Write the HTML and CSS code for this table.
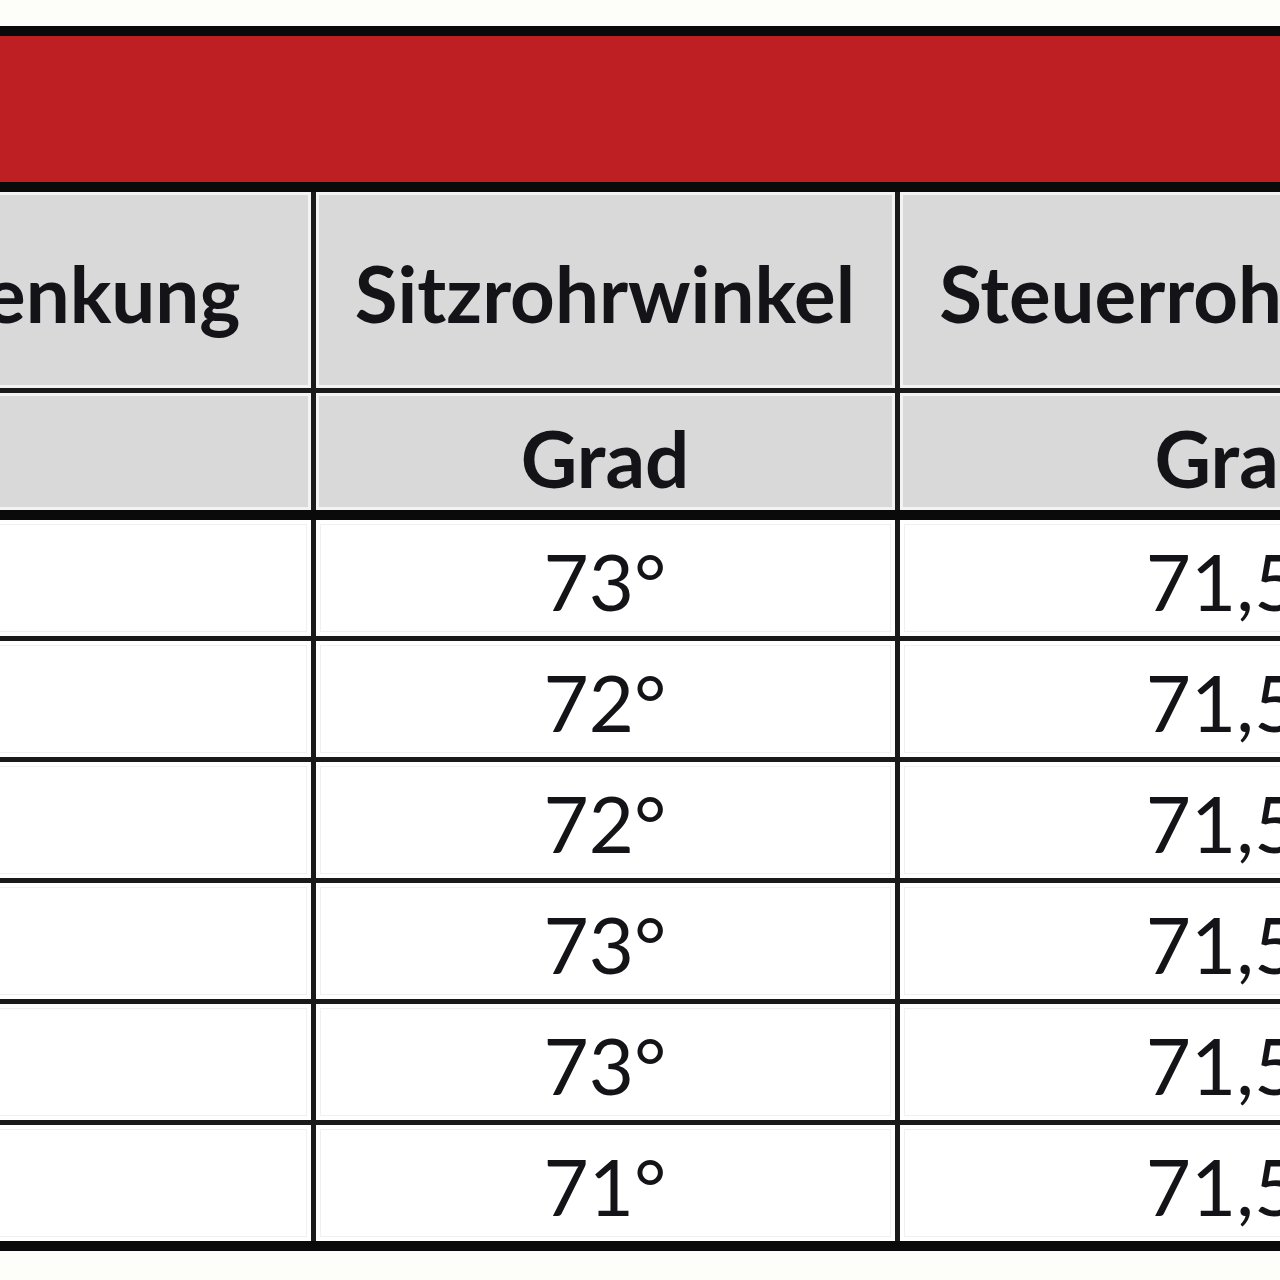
FILE: index.html
```html
<!DOCTYPE html>
<html lang="de">
<head>
    <meta charset="UTF-8">
    <title>Geometrie</title>
    <link rel="stylesheet" href="styles.css">
</head>
<body>
<div class="sheet">
    <table class="geo">
        <colgroup>
            <col class="c-drop">
            <col class="c-seat">
            <col class="c-head">
        </colgroup>
        <tr class="title">
            <td colspan="3">&nbsp;</td>
        </tr>
        <tr class="head">
            <th class="drop">Tretlagerabsenkung</th>
            <th>Sitzrohrwinkel</th>
            <th>Steuerrohrwinkel</th>
        </tr>
        <tr class="unit">
            <th class="drop"></th>
            <th>Grad</th>
            <th>Grad</th>
        </tr>
        <tr class="row">
            <td></td>
            <td>73°</td>
            <td>71,5°</td>
        </tr>
        <tr class="row">
            <td></td>
            <td>72°</td>
            <td>71,5°</td>
        </tr>
        <tr class="row">
            <td></td>
            <td>72°</td>
            <td>71,5°</td>
        </tr>
        <tr class="row">
            <td></td>
            <td>73°</td>
            <td>71,5°</td>
        </tr>
        <tr class="row">
            <td></td>
            <td>73°</td>
            <td>71,5°</td>
        </tr>
        <tr class="row">
            <td></td>
            <td>71°</td>
            <td>71,5°</td>
        </tr>
    </table>
</div>
</body>
</html>
```

FILE: styles.css
```css
*{
    margin: 0;
    padding: 0;
}

html,body{
    overflow: hidden;
}

body{
    background-color: #fdfdfa;
    font-family: "Lato", "Liberation Sans", sans-serif;
    color: #141418;
}

.sheet{
    padding-top: 26px;
}

.geo{
    border-collapse: collapse;
    table-layout: fixed;
    width: 2278px;
    margin-left: -700px;
    border: 10px solid #0a0a0a;
}

.c-drop{
    width: 1008px;
}
.c-seat{
    width: 584px;
}
.c-head{
    width: 686px;
}

.geo td,
.geo th{
    border: 5px solid #1a1a1a;
    text-align: center;
    vertical-align: middle;
    white-space: nowrap;
}

/* roter Titelbalken */
.title td{
    height: 146px;
    background-color: #be1f22;
    border-bottom: 10px solid #0a0a0a;
}

.head th,
.unit th{
    background-color: #d9d9d9;
    box-shadow: inset 0 0 0 3px #f3f3f3;
    font-weight: bold;
    font-size: 78px;
}

.head th{
    height: 190px;
    padding-top: 6px;
}

.unit th{
    height: 105px;
    padding-top: 12px;
    border-bottom: 10px solid #0a0a0a;
}

.head .drop{
    text-align: right;
    padding-right: 70px;
}

.row td{
    height: 110px;
    padding-top: 6px;
    background-color: #ffffff;
    box-shadow: inset 0 0 0 4px #ffffff, inset 0 0 0 5px #f0f0f0;
    font-size: 78px;
}

.row:last-child td{
    border-bottom: 10px solid #0a0a0a;
}
```
